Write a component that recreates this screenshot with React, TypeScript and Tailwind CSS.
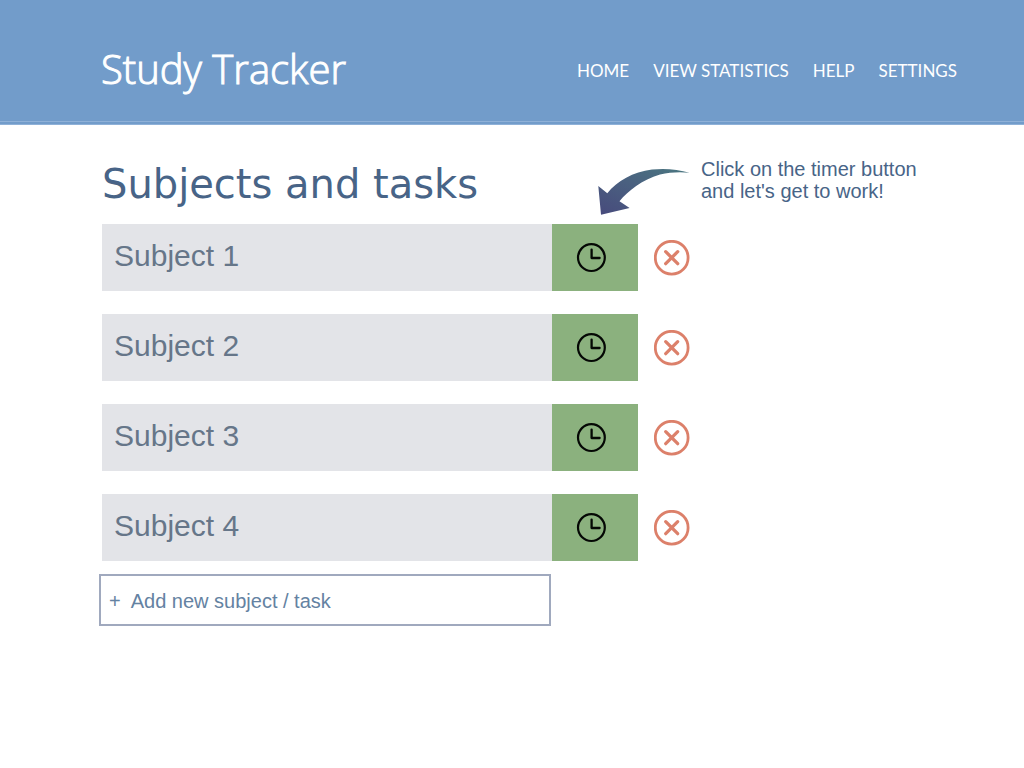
const navItems = ["Home", "View statistics", "Help", "Settings"];
const subjects = ["Subject 1", "Subject 2", "Subject 3", "Subject 4"];

function ClockIcon() {
  return (
    <svg viewBox="0 0 30 30" className="size-[30px]" fill="none" stroke="#050805" aria-hidden="true">
      <circle cx="15.4" cy="14.6" r="13.4" strokeWidth="2.2" />
      <path d="M15.6 6.6v8.4h8" strokeWidth="2.3" strokeLinecap="round" strokeLinejoin="round" />
    </svg>
  );
}

function RemoveIcon() {
  return (
    <svg viewBox="0 0 36 36" className="size-9" fill="none" stroke="#dc806a" aria-hidden="true">
      <circle cx="17.7" cy="17.7" r="16.4" strokeWidth="2.8" />
      <path d="M11.7 11.7l12 12M23.7 11.7l-12 12" strokeWidth="3.3" strokeLinecap="round" />
    </svg>
  );
}

function HintArrow() {
  return (
    <svg viewBox="0 0 92 48" className="mt-[10px] h-12 w-[92px] shrink-0" aria-hidden="true">
      <defs>
        <linearGradient id="hint-arrow" x1="0" y1="1" x2="1" y2="0">
          <stop offset="0" stopColor="#474a7c" />
          <stop offset="0.5" stopColor="#4a6080" />
          <stop offset="1" stopColor="#4a7780" />
        </linearGradient>
      </defs>
      <path
        d="M91.5 4.8C80 1.200 66 0.200 54 1.600 35 4 19 13 9.300 25.300L.3 18 3 46.800 31.600 40 21.500 33.300C30 23 44 12 62 6.600 72 4.200 82 3.800 91.500 4.800Z"
        fill="url(#hint-arrow)"
      />
    </svg>
  );
}

export default function App() {
  return (
    <div className="min-h-screen bg-white font-['Liberation_Sans',sans-serif]">
      <header className="bg-[#729cca]">
        <div className="flex h-[121px] items-center justify-between pt-5 pr-[67px] pl-[101px]">
          <h1 className="pb-1 font-['Open_Sans',sans-serif] text-[40px] leading-[56px] font-light whitespace-nowrap text-white [-webkit-text-stroke:1px_white]">
            Study Tracker
          </h1>
          <nav className="flex gap-6 font-['Lato',sans-serif] text-[17px] leading-6 whitespace-nowrap text-white uppercase">
            {navItems.map((item) => (
              <a key={item} href="#">
                {item}
              </a>
            ))}
          </nav>
        </div>
        <div className="h-1 border-y border-[#8fb1d8]" />
      </header>

      <main className="px-[99px] pt-[33px]">
        <div className="flex min-h-[66px] items-start pl-[3px]">
          <h2 className="w-[496px] shrink-0 font-['DejaVu_Sans',sans-serif] text-[40px] leading-[52px] whitespace-nowrap text-[#486487]">
            Subjects and tasks
          </h2>
          <HintArrow />
          <p className="ml-[11px] text-[20px] leading-[22px] whitespace-nowrap text-[#486487]">
            Click on the timer button
            <br />
            and let's get to work!
          </p>
        </div>

        <ul className="flex flex-col gap-[23px] pl-[3px]">
          {subjects.map((subject) => (
            <li key={subject} className="flex h-[67px] items-stretch">
              <div className="flex max-w-[450px] flex-1 items-center bg-[#e3e4e8] pb-1 pl-3 text-[30px] leading-9 text-[#667689]">
                {subject}
              </div>
              <button
                type="button"
                aria-label={`Start timer for ${subject}`}
                className="flex w-[86px] items-center bg-[#8bb17e] pl-6"
              >
                <ClockIcon />
              </button>
              <button type="button" aria-label={`Remove ${subject}`} className="ml-4 flex items-center">
                <RemoveIcon />
              </button>
            </li>
          ))}
        </ul>

        <button
          type="button"
          className="mt-[13px] flex h-[52px] w-full max-w-[452px] items-center gap-[10px] border-2 border-[#a0a9be] pt-[2px] pl-2 text-[20px] leading-6 text-[#6482a2]"
        >
          <span>+</span>
          <span>Add new subject / task</span>
        </button>
      </main>
    </div>
  );
}
